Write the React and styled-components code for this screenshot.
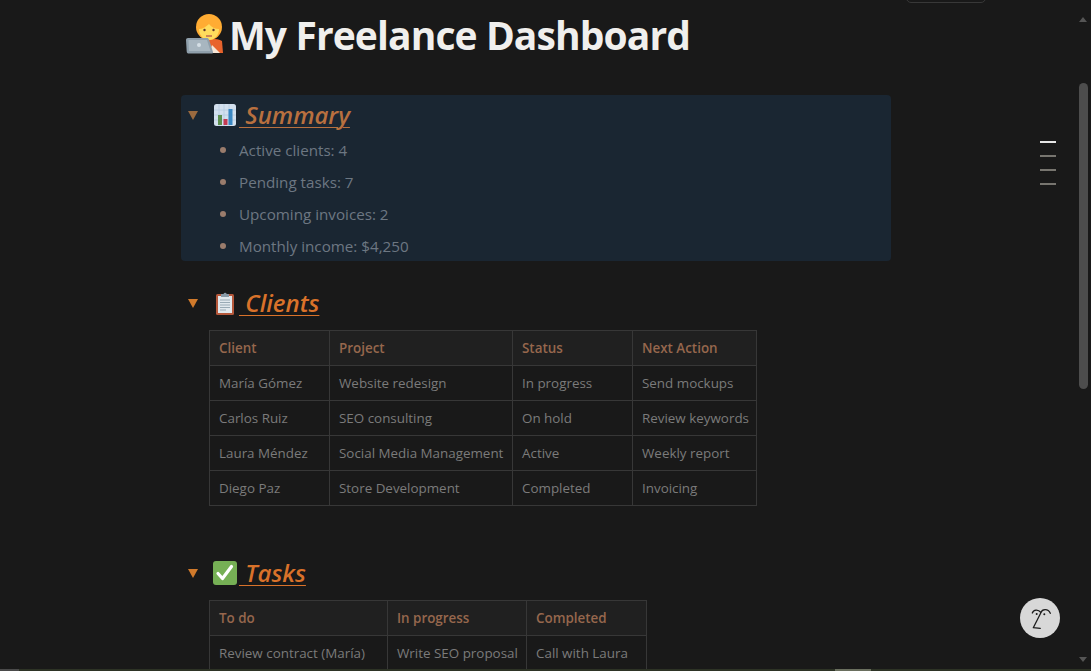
import React from "react";
import styled, { createGlobalStyle } from "styled-components";

const Global = createGlobalStyle`
  html, body { margin: 0; padding: 0; height: 100%; background: #191919; overflow: hidden; }
  #root { height: 100%; }
`;

const Page = styled.div`
  position: relative;
  width: 1091px;
  height: 671px;
  overflow: hidden;
  background: #191919;
  font-family: "Open Sans", "Noto Sans", sans-serif;
  color: #7f7f7f;
`;
const Content = styled.main`
  width: 710px;
  margin-left: 181px;
  padding-top: 8px;
`;
const Title = styled.h1`
  display: flex;
  align-items: center;
  margin: 0 0 34px 4px;
  height: 53px;
  font-size: 39px;
  letter-spacing: -0.9px;
  font-weight: 700;
  line-height: 53px;
  color: #f0efed;
  white-space: nowrap;
`;
const Section = styled.section`
  margin-bottom: ${(p) => p.$gap}px;
  border-radius: 4px;
  background: ${(p) => p.$bg || "transparent"};
  padding-top: 3px;
`;
const Heading = styled.h2`
  display: flex;
  align-items: center;
  height: 34px;
  margin: 0;
  padding-left: 7px;
  font-size: 24px;
  font-weight: 600;
`;
const Caret = styled.span`
  width: 0;
  height: 0;
  margin-right: 15px;
  border-left: 5.5px solid transparent;
  border-right: 5.5px solid transparent;
  border-top: 9px solid ${(p) => p.$color};
`;
const HeadLink = styled.span`
  margin-left: 2px;
  padding-bottom: 2px;
  font-style: italic;
  font-weight: 600;
  font-size: 24px;
  color: ${(p) => p.$color};
  text-decoration: underline;
  text-decoration-thickness: 1px;
  text-underline-offset: 3px;
  white-space: pre;
`;
const Bullets = styled.ul`
  display: flex;
  flex-direction: column;
  gap: 4px;
  margin: 4px 0 0;
  padding: 0 0 1px 36px;
  list-style: none;
`;
const Bullet = styled.li`
  display: flex;
  align-items: center;
  height: 28px;
  font-size: 15.2px;
  color: #6d7782;
  &::before {
    content: "";
    width: 6px;
    height: 6px;
    margin: 0 13px 0 3px;
    border-radius: 50%;
    background: #9a7c6c;
  }
`;
const TableWrap = styled.div`
  margin: ${(p) => p.$top}px 0 0 28px;
`;
const Table = styled.table`
  width: ${(p) => p.$w}px;
  border-collapse: collapse;
  table-layout: fixed;
  font-size: 13.4px;
  line-height: 20px;
`;
const Th = styled.th`
  box-sizing: border-box;
  width: ${(p) => p.$w}px;
  height: 35px;
  padding: 0 9px;
  border: 1px solid #373737;
  background: #202020;
  color: #96674d;
  font-weight: 600;
  text-align: left;
  white-space: nowrap;
`;
const Td = styled.td`
  box-sizing: border-box;
  height: 35px;
  padding: 0 9px;
  border: 1px solid #373737;
  color: #7b7b7b;
  white-space: nowrap;
`;
const Outline = styled.div`
  position: absolute;
  left: 1040px;
  top: 141px;
  display: flex;
  flex-direction: column;
  gap: 12px;
`;
const Dash = styled.span`
  display: block;
  width: 16px;
  height: 2px;
  background: ${(p) => (p.$on ? "#e6e6e6" : "#77756f")};
`;
const TopPill = styled.div`
  position: absolute;
  left: 906px;
  top: -12px;
  width: 78px;
  height: 13px;
  border: 1px solid #383838;
  border-radius: 5px;
`;
const ScrollThumb = styled.div`
  position: absolute;
  left: 1079px;
  top: 83px;
  width: 9px;
  height: 306px;
  border-radius: 5px;
  background: #4d4d4d;
`;
const ScrollArrow = styled.div`
  position: absolute;
  left: 1079px;
  ${(p) => (p.$up ? "top: 17px;" : "top: 657px;")}
  width: 0;
  height: 0;
  border-left: 4.5px solid transparent;
  border-right: 4.5px solid transparent;
  ${(p) => (p.$up ? "border-bottom" : "border-top")}: 5px solid #555;
`;
const Bottom = styled.div`
  position: absolute;
  left: 0;
  right: 0;
  bottom: 0;
  height: 2px;
  background: #2d3325;
`;
const BottomThumb = styled.div`
  position: absolute;
  left: ${(p) => p.$x}px;
  top: 0;
  width: ${(p) => p.$w}px;
  height: 2px;
  background: ${(p) => p.$color};
`;
const Help = styled.button`
  position: absolute;
  left: 1020px;
  top: 598px;
  width: 40px;
  height: 40px;
  padding: 0;
  border: 0;
  border-radius: 50%;
  background: #d8d8d8;
  display: flex;
  align-items: center;
  justify-content: center;
`;

const PersonIcon = () => (
  <svg width="40" height="40" viewBox="0 0 40 40" style={{ flex: "none", marginRight: 4, marginTop: -2 }}>
    <path d="M18 27c4-3 14-3 19 0l1 12H20z" fill="#e8632c" />
    <path d="M27 31l8 8H24z" fill="#f6e6d6" />
    <circle cx="24" cy="13" r="13" fill="#ffac33" />
    <path d="M14 15c3 0 7-2 10-5 2 3 6 5 10 5 0 6-4 11-10 11s-10-5-10-11z" fill="#ffdc5d" />
    <circle cx="19.500" cy="16" r="1.200" fill="#60352a" />
    <circle cx="28.500" cy="16" r="1.200" fill="#60352a" />
    <path d="M21 22h6" stroke="#c1694f" strokeWidth="1.500" />
    <path d="M1 26c0-1.200.8-2 2-2h19c1 0 1.700.6 2 1.600L28 38c.3 1-.4 1.500-1.500 1.500H4c-1.500 0-2.200-.6-2.300-2z" fill="#8f9fab" />
    <path d="M3.500 26h18.500l3.500 11H4z" fill="#a8b6c0" />
    <circle cx="14" cy="31" r="2" fill="#d5dfe6" />
  </svg>
);
const ChartIcon = () => (
  <svg width="24" height="24" viewBox="0 0 24 24" style={{ flex: "none" }}>
    <rect x="1" y="1" width="22" height="22" rx="2.500" fill="#d3e0ee" />
    <path d="M1 7h22M1 12h22M1 17h22M6 1v22M11 1v22M16 1v22" stroke="#b6cbe0" strokeWidth=".8" />
    <rect x="5" y="12" width="4" height="10" fill="#5c8f4f" />
    <rect x="10.500" y="16" width="4" height="6" fill="#c43a52" />
    <rect x="15.500" y="6" width="4" height="16" fill="#3b88c3" />
  </svg>
);
const ClipIcon = () => (
  <svg width="24" height="24" viewBox="0 0 24 24" style={{ flex: "none" }}>
    <rect x="3" y="3" width="18" height="21" rx="1.500" fill="#b5583b" />
    <rect x="5" y="5" width="14" height="17" fill="#e1e8ed" />
    <path d="M7 9h10M7 11.500h10M7 14h10M7 16.500h10M7 19h6" stroke="#99aab5" strokeWidth="1" />
    <path d="M8 6V3h2.500a1.700 1.700 0 0 1 3.200 0H16v3z" fill="#8899a6" />
  </svg>
);
const CheckIcon = () => (
  <svg width="24" height="24" viewBox="0 0 24 24" style={{ flex: "none" }}>
    <rect x="0" y="0" width="24" height="24" rx="3" fill="#76b055" />
    <path d="M5 12.500l4.500 5L18.500 5.500" fill="none" stroke="#fff" strokeWidth="3.200" strokeLinecap="round" strokeLinejoin="round" />
  </svg>
);
const FaceIcon = () => (
  <svg width="24" height="24" viewBox="0 0 24 24">
    <path d="M4.300 7C5.500 3.500 10 3 13 6.500M13 6.500C14 3 20 2 22.300 7.300M13 6.500L5.300 21.700l7 .6" fill="none" stroke="#1c1c1c" strokeWidth="1.300" strokeLinecap="round" strokeLinejoin="round" />
    <circle cx="8.700" cy="8" r="1" fill="#1c1c1c" />
    <circle cx="16.300" cy="8.300" r="1" fill="#1c1c1c" />
  </svg>
);

const DataTable = ({ widths, rows }) => (
  <Table $w={widths.reduce((a, b) => a + b, 0)}>
    <thead>
      <tr>
        {rows[0].map((h, i) => (
          <Th key={h} $w={widths[i]}>{h}</Th>
        ))}
      </tr>
    </thead>
    <tbody>
      {rows.slice(1).map((r) => (
        <tr key={r[0]}>
          {r.map((c) => (
            <Td key={c}>{c}</Td>
          ))}
        </tr>
      ))}
    </tbody>
  </Table>
);

const clients = [
  ["Client", "Project", "Status", "Next Action"],
  ["María Gómez", "Website redesign", "In progress", "Send mockups"],
  ["Carlos Ruiz", "SEO consulting", "On hold", "Review keywords"],
  ["Laura Méndez", "Social Media Management", "Active", "Weekly report"],
  ["Diego Paz", "Store Development", "Completed", "Invoicing"],
];
const tasks = [
  ["To do", "In progress", "Completed"],
  ["Review contract (María)", "Write SEO proposal", "Call with Laura"],
];

export default function App() {
  return (
    <Page>
      <Global />
      <Content>
        <Title><PersonIcon />My Freelance Dashboard</Title>
        <Section $bg="#1a2632" $gap={22}>
          <Heading>
            <Caret $color="#9a6a3f" />
            <ChartIcon />
            <HeadLink $color="#b8703f"> Summary</HeadLink>
          </Heading>
          <Bullets>
            <Bullet>Active clients: 4</Bullet>
            <Bullet>Pending tasks: 7</Bullet>
            <Bullet>Upcoming invoices: 2</Bullet>
            <Bullet>Monthly income: $4,250</Bullet>
          </Bullets>
        </Section>
        <Section $gap={47}>
          <Heading>
            <Caret $color="#d17a2b" />
            <ClipIcon />
            <HeadLink $color="#d9722a"> Clients</HeadLink>
          </Heading>
          <TableWrap $top={10}>
            <DataTable widths={[120, 183, 120, 124]} rows={clients} />
          </TableWrap>
        </Section>
        <Section $gap={0}>
          <Heading>
            <Caret $color="#d17a2b" />
            <CheckIcon />
            <HeadLink $color="#d9722a"> Tasks</HeadLink>
          </Heading>
          <TableWrap $top={10}>
            <DataTable widths={[178, 139, 120]} rows={tasks} />
          </TableWrap>
        </Section>
      </Content>
      <TopPill />
      <Outline>
        <Dash $on />
        <Dash />
        <Dash />
        <Dash />
      </Outline>
      <ScrollArrow $up />
      <ScrollThumb />
      <ScrollArrow />
      <Help aria-label="Help"><FaceIcon /></Help>
      <Bottom>
        <BottomThumb $x={0} $w={19} $color="#4a4a4a" />
        <BottomThumb $x={835} $w={36} $color="#6a6f5e" />
      </Bottom>
    </Page>
  );
}
